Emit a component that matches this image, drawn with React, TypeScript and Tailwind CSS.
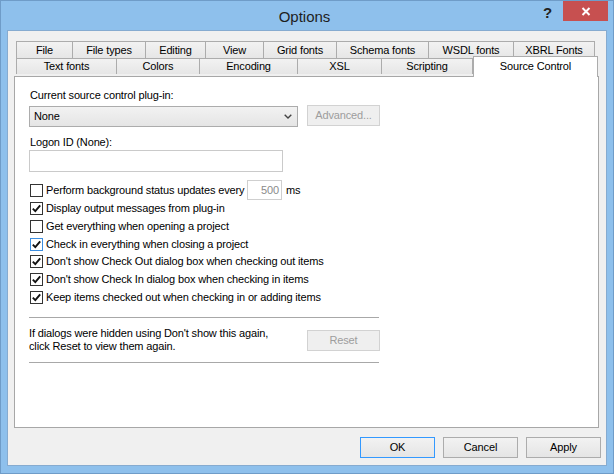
const tabsTop = [
  { label: "File", w: "w-[57px]" },
  { label: "File types", w: "w-[73px]" },
  { label: "Editing", w: "w-[60px]" },
  { label: "View", w: "w-[58px]" },
  { label: "Grid fonts", w: "w-[73px]" },
  { label: "Schema fonts", w: "w-[92px]" },
  { label: "WSDL fonts", w: "w-[85px]" },
  { label: "XBRL Fonts", w: "w-[81px]" },
];

const tabsBottom = [
  { label: "Text fonts", w: "w-[101px]" },
  { label: "Colors", w: "w-[83px]" },
  { label: "Encoding", w: "w-[98px]" },
  { label: "XSL", w: "w-[84px]" },
  { label: "Scripting", w: "w-[91px]" },
];

const options = [
  { label: "Display output messages from plug-in", checked: true },
  { label: "Get everything when opening a project", checked: false },
  { label: "Check in everything when closing a project", checked: true, hot: true },
  { label: "Don't show Check Out dialog box when checking out items", checked: true },
  { label: "Don't show Check In dialog box when checking in items", checked: true },
  { label: "Keep items checked out when checking in or adding items", checked: true },
];

function CheckBox({ checked, hot }: { checked: boolean; hot?: boolean }) {
  return (
    <span
      className={`flex h-[13px] w-[13px] shrink-0 items-center justify-center border bg-white ${
        hot ? "border-[#3c8ee0]" : "border-[#333333]"
      }`}
    >
      {checked && (
        <svg width="11" height="11" viewBox="0 0 11 11">
          <path d="M1.8 5.6 L4.3 8.2 L9.2 2.4" fill="none" stroke="#111" strokeWidth="1.9" />
        </svg>
      )}
    </span>
  );
}

function Tab({ label, w }: { label: string; w: string }) {
  return (
    <div
      className={`${w} flex shrink-0 items-center justify-center border-t border-r border-[#acacac] bg-gradient-to-b from-[#f2f2f2] to-[#e6e6e6] first:border-l`}
    >
      {label}
    </div>
  );
}

function Button({ label, disabled, def }: { label: string; disabled?: boolean; def?: boolean }) {
  if (disabled) {
    return (
      <div className="flex h-[21px] w-[73px] items-center justify-center border border-[#d2d2d2] bg-[#efefef] text-[#9d9d9d]">
        {label}
      </div>
    );
  }
  return (
    <div
      className={`flex h-[21px] w-[75px] items-center justify-center border bg-gradient-to-b from-[#f2f2f2] to-[#e5e5e5] ${
        def ? "border-[#3399ff]" : "border-[#acacac]"
      }`}
    >
      {label}
    </div>
  );
}

export default function App() {
  return (
    <div className="flex h-[474px] w-[614px] flex-col border border-[#6f9cc8] bg-[#8ec0ec] font-['Liberation_Sans',Arial,sans-serif] text-[11px] leading-[15px] tracking-[-0.15px] text-black">
      {/* title bar */}
      <div className="flex h-[29px] shrink-0">
        <div className="flex-1" />
        <div className="flex items-center pt-[1px] text-[15px] tracking-normal text-[#1e1e1e]">Options</div>
        <div className="flex flex-1 items-start justify-end pr-[5px]">
          <span className="mt-[4px] mr-[11px] text-[15px] font-bold leading-[15px] text-[#222]">?</span>
          <div className="flex h-[20px] w-[45px] items-center justify-center bg-[#c75050]">
            <svg width="10" height="9" viewBox="0 0 10 9">
              <path d="M1.5 1 L8.5 8 M8.5 1 L1.5 8" stroke="#fff" strokeWidth="2" />
            </svg>
          </div>
        </div>
      </div>

      {/* client area */}
      <div className="mr-[6px] ml-[6px] mb-[7px] flex flex-1 flex-col border border-[#86abd0] bg-[#f0f0f0] pt-[10px] pl-[6px]">
        {/* tab header */}
        <div className="ml-[2px] flex w-[579px] flex-col">
          <div className="flex h-[17px]">
            {tabsTop.map((t) => (
              <Tab key={t.label} {...t} />
            ))}
          </div>
          <div className="flex h-[18px] items-start">
            {tabsBottom.map((t) => (
              <Tab key={t.label} {...t} />
            ))}
            <div className="relative z-10 -mt-[2px] flex h-[21px] w-[125px] shrink-0 justify-center border-t border-r border-l border-[#acacac] bg-white pt-[2px]">
              Source Control
            </div>
          </div>
        </div>

        {/* panel */}
        <div className="flex h-[352px] w-[585px] flex-col border border-[#a7a7a7] bg-white pt-[11px] pl-[14px]">
          <div className="ml-[1px]">Current source control plug-in:</div>

          <div className="mt-[2px] flex items-start gap-[9px]">
            <div className="mt-[1px] flex h-[21px] w-[269px] items-center justify-between border border-[#acacac] bg-gradient-to-b from-[#f2f2f2] to-[#e5e5e5] pr-[5px] pl-[4px]">
              <span>None</span>
              <svg width="8" height="5" viewBox="0 0 8 5">
                <path d="M0.7 0.7 L4 4 L7.3 0.7" fill="none" stroke="#444" strokeWidth="1.4" />
              </svg>
            </div>
            <Button label="Advanced..." disabled />
          </div>

          <div className="mt-[8px] ml-[1px]">Logon ID (None):</div>
          <div className="h-[22px] w-[254px] border border-[#cacaca] bg-white" />

          <div className="mt-[8px] flex h-[20px] items-center">
            <span className="ml-[1px]">
              <CheckBox checked={false} />
            </span>
            <span className="ml-[3px] w-[201px]">Perform background status updates every</span>
            <div className="flex h-[20px] w-[35px] items-center justify-end border border-[#cfcfcf] pr-[2px] text-[#8a8a8a]">
              500
            </div>
            <span className="ml-[4px]">ms</span>
          </div>

          {options.map((o) => (
            <div key={o.label} className="flex h-[17.7px] items-center">
              <span className="ml-[1px]">
                <CheckBox checked={o.checked} hot={o.hot} />
              </span>
              <span className="ml-[3px]">{o.label}</span>
            </div>
          ))}

          <div className="mt-[11px] h-px w-[350px] bg-[#a8a8a8]" />

          <div className="mt-[9px] flex h-[26px] w-[351px] items-center justify-between">
            <div className="leading-[13px]">
              <div>If dialogs were hidden using Don't show this again,</div>
              <div>click Reset to view them again.</div>
            </div>
            <Button label="Reset" disabled />
          </div>

          <div className="mt-[9px] h-px w-[350px] bg-[#a8a8a8]" />
        </div>

        {/* footer buttons */}
        <div className="flex justify-end gap-[8px] pt-[9px] pr-[5px]">
          <Button label="OK" def />
          <Button label="Cancel" />
          <Button label="Apply" />
        </div>
      </div>
    </div>
  );
}
